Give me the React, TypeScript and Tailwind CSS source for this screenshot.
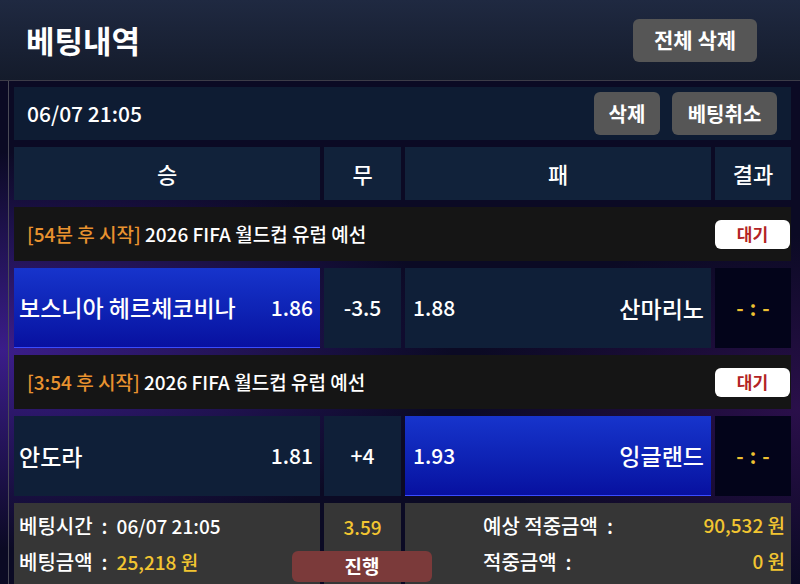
const font = { fontFamily: '"Noto Sans CJK KR", "Noto Sans", sans-serif' };

interface Match {
    time: string;
    league: string;
    home: string;
    homeOdds: string;
    handicap: string;
    away: string;
    awayOdds: string;
    pick: "home" | "away";
}

const matches: Match[] = [
    {
        time: "[54분 후 시작]",
        league: "2026 FIFA 월드컵 유럽 예선",
        home: "보스니아 헤르체코비나",
        homeOdds: "1.86",
        handicap: "-3.5",
        away: "산마리노",
        awayOdds: "1.88",
        pick: "home",
    },
    {
        time: "[3:54 후 시작]",
        league: "2026 FIFA 월드컵 유럽 예선",
        home: "안도라",
        homeOdds: "1.81",
        handicap: "+4",
        away: "잉글랜드",
        awayOdds: "1.93",
        pick: "away",
    },
];

const grid = "grid grid-cols-[306px_77px_306px_76px] gap-x-[4px]";
const picked = "bg-gradient-to-b from-[#1734cc] to-[#0810a0] border-b border-[#3a4cff]";
const plain = "bg-[#0f1f38]";

const MatchBlock = ({ m }: { m: Match }) => (
    <>
        <div className="flex items-center justify-between h-[54px] bg-[#151515] pl-[13px]">
            <div className="text-[19px] font-medium text-white">
                <span className="text-[#e8922f]">{m.time}</span> {m.league}
            </div>
            <div className="flex items-center justify-center w-[75px] h-[29px] mr-[1px] bg-white rounded-md text-[#b32424] text-[17px] font-bold">
                대기
            </div>
        </div>
        <div className={`${grid} h-[80px]`}>
            <div
                className={`flex items-center justify-between pl-[5px] pr-[7px] font-medium text-white ${
                    m.pick === "home" ? picked : plain
                }`}
            >
                <span className="text-[23px]">{m.home}</span>
                <span className="text-[21px]">{m.homeOdds}</span>
            </div>
            <div className="flex items-center justify-center bg-[#0f1f38] text-[21px] font-medium text-white">
                {m.handicap}
            </div>
            <div
                className={`flex items-center justify-between pl-[8px] pr-[7px] font-medium text-white ${
                    m.pick === "away" ? picked : plain
                }`}
            >
                <span className="text-[21px]">{m.awayOdds}</span>
                <span className="text-[23px]">{m.away}</span>
            </div>
            <div className="flex items-center justify-center gap-[6px] bg-[#03041a] text-[20px] font-bold text-[#eec232]">
                <span>-</span>
                <span>:</span>
                <span>-</span>
            </div>
        </div>
    </>
);

export default function App() {
    return (
        <div
            style={font}
            className="w-[800px] h-[584px] overflow-hidden bg-[#0b0a24] bg-[radial-gradient(ellipse_at_0%_60%,#3b1d8a_0%,transparent_40%),radial-gradient(ellipse_at_100%_70%,#2a0f4a_0%,transparent_30%)]"
        >
            <div className="flex items-center justify-between h-[81px] pl-[26px] pr-[43px] bg-gradient-to-b from-[#1f2941] to-[#141b2b] border-b border-[#3d3c48]">
                <h1 className="text-[31px] font-bold text-white">베팅내역</h1>
                <button className="w-[124px] h-[43px] bg-[#565656] rounded-md text-[21px] font-bold text-white">
                    전체 삭제
                </button>
            </div>

            <div className="ml-[8px] border-l border-[#4a4a56] pl-[5px] pt-[6px] h-[503px]">
                <div className="relative flex flex-col gap-[7px] w-[777px]">
                    <div className="flex items-center justify-between h-[53px] bg-[#0e1c33] pl-[13px] pr-[14px]">
                        <span className="text-[21px] font-medium text-white">06/07 21:05</span>
                        <div className="flex gap-[12px]">
                            <button className="w-[66px] h-[43px] bg-[#565656] rounded-md text-[20px] font-bold text-white">
                                삭제
                            </button>
                            <button className="w-[105px] h-[43px] bg-[#565656] rounded-md text-[20px] font-bold text-white">
                                베팅취소
                            </button>
                        </div>
                    </div>

                    <div className={`${grid} h-[53px] text-[22px] font-medium text-white`}>
                        <div className="flex items-center justify-center bg-[#11223a]">승</div>
                        <div className="flex items-center justify-center bg-[#11223a]">무</div>
                        <div className="flex items-center justify-center bg-[#11223a]">패</div>
                        <div className="flex items-center justify-center bg-[#11223a]">결과</div>
                    </div>

                    {matches.map((m, i) => (
                        <MatchBlock key={i} m={m} />
                    ))}

                    <div className={`${grid} h-[82px] text-[20px] font-medium text-white`}>
                        <div className="flex flex-col justify-center gap-[6px] bg-[#363636] pl-[5px]">
                            <div>
                                베팅시간 &nbsp;:&nbsp; <span className="text-[19px]">06/07 21:05</span>
                            </div>
                            <div>
                                베팅금액 &nbsp;:&nbsp; <span className="text-[#f2c531] text-[19px]">25,218 원</span>
                            </div>
                        </div>
                        <div className="flex justify-center pt-[10px] bg-[#363636] text-[19px] text-[#f2c531]">3.59</div>
                        <div className="col-span-2 flex flex-col justify-center gap-[6px] bg-[#363636] pl-[78px] pr-[6px]">
                            <div className="flex justify-between">
                                <span>예상 적중금액 &nbsp;:</span>
                                <span className="text-[#f2c531] text-[19px]">90,532 원</span>
                            </div>
                            <div className="flex justify-between">
                                <span>적중금액 &nbsp;:</span>
                                <span className="text-[#f2c531] text-[19px]">0 원</span>
                            </div>
                        </div>
                    </div>

                    <div className="absolute left-[278px] bottom-[3px] flex items-center justify-center w-[140px] h-[31px] bg-[#7b3a3a] rounded-md text-[19px] font-bold text-white">
                        진행
                    </div>
                </div>
            </div>
        </div>
    );
}
